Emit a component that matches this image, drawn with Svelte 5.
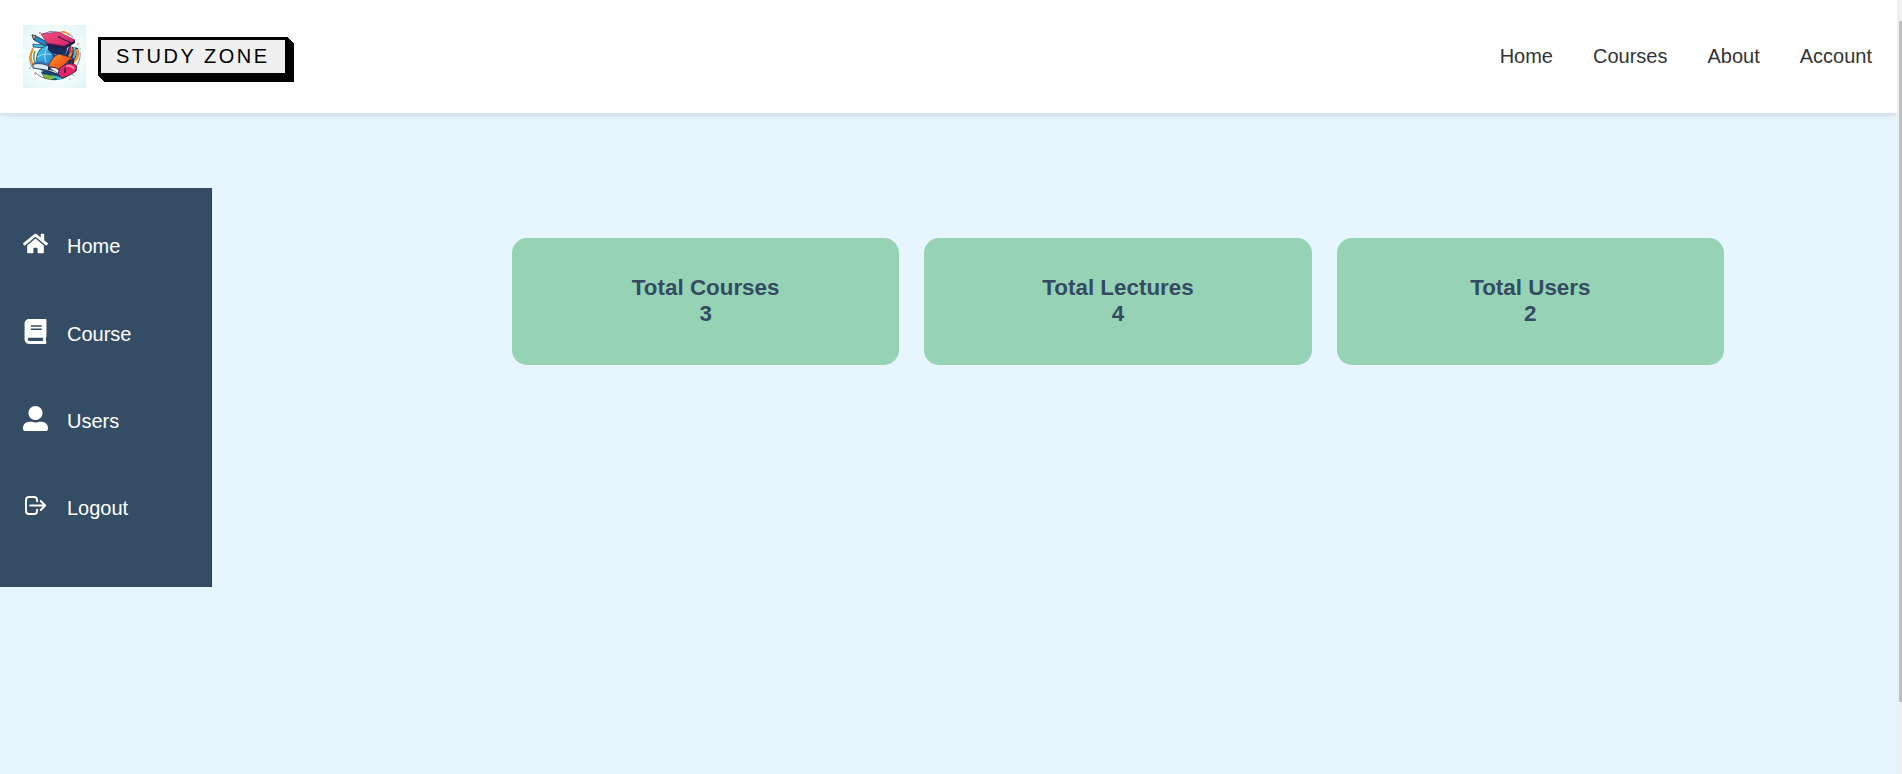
<script>
  const nav = ['Home', 'Courses', 'About', 'Account'];
  const menu = ['Home', 'Course', 'Users', 'Logout'];
  const stats = [
    { label: 'Total Courses', value: 3 },
    { label: 'Total Lectures', value: 4 },
    { label: 'Total Users', value: 2 }
  ];
</script>

<div class="page">
  <div class="content">
    <header>
      <div class="brand">
        <svg class="logo" viewBox="0 0 63 63" aria-hidden="true">
          <defs>
            <radialGradient id="paper" r="0.75"><stop offset="0.45" stop-color="#f8fefd" /><stop offset="1" stop-color="#dcf3f4" /></radialGradient>
            <linearGradient id="globe" x2="1" y2="1"><stop stop-color="#4fcdf2" /><stop offset="0.55" stop-color="#278bcf" /><stop offset="1" stop-color="#173c75" /></linearGradient>
            <linearGradient id="cap" x2="1" y2="1"><stop stop-color="#f0527f" /><stop offset="1" stop-color="#dc1c69" /></linearGradient>
            <linearGradient id="orange" x2="1" y2="1"><stop stop-color="#ffa02a" /><stop offset="0.5" stop-color="#f4631b" /><stop offset="1" stop-color="#e7481c" /></linearGradient>
          </defs>
          <rect width="63" height="63" fill="url(#paper)" />
          <path d="M10 23Q4 33 9 42M12 47Q18 54 28 54M40 7Q46 8 50 12M57 27Q58 36 52 43M20 9Q27 5 34 7" fill="none" stroke="#5b4b68" stroke-width="0.7" />
          <path d="M10 24Q5 33 11 41" fill="none" stroke="#ee8f2a" stroke-width="2" />
          <path d="M12 26Q9 33 13 39" fill="none" stroke="#679e47" stroke-width="1.6" />
          <path d="M46 21L55 23Q58 32 50 39L41 35Z" fill="#192d58" />
          <path d="M47 20Q51 28 44 34M54 24Q56 32 51 37" fill="none" stroke="#ff8b23" stroke-width="2.4" />
          <path d="M51 22Q54 30 48 36" fill="none" stroke="#4fbce0" stroke-width="2.2" />
          <path d="M38 7Q43 6 46 10" fill="none" stroke="#fb8b24" stroke-width="1.6" />
          <path d="M9 10L13 11L24 17L22 21L11 15Z" fill="#218ac4" stroke="#182950" stroke-width="0.8" />
          <path d="M9 10L13 11L11 15Z" fill="#f2b17f" stroke="#182950" stroke-width="0.7" />
          <path d="M10 19L21 20L23 23L10 22Z" fill="#48c5e5" stroke="#182950" stroke-width="0.7" />
          <circle cx="28" cy="34" r="14.5" fill="url(#globe)" stroke="#17365e" stroke-width="0.8" />
          <path d="M14 32Q23 26 37 32M25 21Q19 29 24 40M31 23Q34 30 31 38" fill="none" stroke="#c2f3fa" stroke-width="0.9" opacity="0.8" />
          <path d="M25 18V25Q30 31 43 29L45 20Z" fill="#172b58" />
          <path d="M28 28Q35 32 43 28V32Q37 33 30 32Z" fill="#244b87" />
          <path d="M23 18L41 21L52 15V18L42 24L24 21Z" fill="#25204b" />
          <path d="M18 9L36 7L52 15L41 21L24 18Z" fill="url(#cap)" stroke="#6d2056" stroke-width="0.6" />
          <path d="M36 12Q43 16 47 17V25" fill="none" stroke="#142549" stroke-width="1" />
          <circle cx="36" cy="12" r="1.1" fill="#203057" />
          <path d="M47 22L46 27L49 28L48 22Z" fill="#ec275f" />
          <path d="M18 47Q25 43 37 48L44 52Q33 58 21 53Z" fill="#17476d" />
          <path d="M20 49L35 52L27 55L20 52Z" fill="#82b53a" />
          <path d="M28 50L42 53L35 55Z" fill="#34b9d5" />
          <path d="M10 39Q21 37 29 43L37 50Q24 44 10 43Z" fill="#dfeaf1" stroke="#182950" stroke-width="0.9" />
          <path d="M11 38Q22 35 29 43" fill="none" stroke="#3774b9" stroke-width="2" />
          <path d="M25 42Q29 31 36 29L50 33Q42 36 38 46Q32 41 25 42Z" fill="url(#orange)" stroke="#3b2549" stroke-width="0.8" />
          <path d="M25 42Q33 41 38 46Q42 37 51 33V39L37 50Q32 45 25 45Z" fill="#253052" />
          <path d="M27 43Q34 42 38 48Q43 41 49 37L38 50Z" fill="#f5eee6" />
          <path d="M37 43Q44 37 51 39Q55 41 53 46Q47 51 39 53Q33 50 37 43Z" fill="#e82368" stroke="#3a2048" stroke-width="0.9" />
          <path d="M43 41Q49 40 51 44" fill="none" stroke="#f884a0" stroke-width="2" />
          <path d="M42 44L42 47" stroke="#4b2046" stroke-width="2" stroke-linecap="round" />
          <g fill="#ef527f"><circle cx="17" cy="8" r="0.9" /><circle cx="55" cy="19" r="0.8" /><circle cx="12" cy="49" r="0.8" /><circle cx="47" cy="54" r="0.7" /></g>
          <g fill="#35b6d4"><circle cx="57" cy="24" r="0.7" /><circle cx="7" cy="43" r="0.7" /><circle cx="50" cy="50" r="0.8" /></g>
        </svg>
        <div class="name">STUDY ZONE</div>
      </div>
      <nav>
        {#each nav as item}<span>{item}</span>{/each}
      </nav>
    </header>

    <div class="dashboard">
      <aside>
        {#each menu as item}
          <div class="entry">
            <div class="icon">
              {#if item === 'Home'}
                <svg viewBox="0 0 576 512"><path d="M280.37 148.26L96 300.11V464a16 16 0 0 0 16 16l112.06-.29a16 16 0 0 0 15.92-16V368a16 16 0 0 1 16-16h64a16 16 0 0 1 16 16v95.64a16 16 0 0 0 16 16.05L464 480a16 16 0 0 0 16-16V300L295.67 148.26a12.19 12.19 0 0 0-15.3 0zM571.6 251.47L488 182.56V44.05a12 12 0 0 0-12-12h-56a12 12 0 0 0-12 12v72.61L318.47 43a48 48 0 0 0-61 0L4.34 251.47a12 12 0 0 0-1.6 16.9l25.5 31A12 12 0 0 0 45.15 301l235.22-193.74a12.19 12.19 0 0 1 15.3 0L530.9 301a12 12 0 0 0 16.9-1.6l25.5-31a12 12 0 0 0-1.7-16.93z" /></svg>
              {:else if item === 'Course'}
                <svg viewBox="0 0 448 512"><path d="M448 360V24c0-13.3-10.7-24-24-24H96C43 0 0 43 0 96v320c0 53 43 96 96 96h328c13.3 0 24-10.7 24-24v-16c0-7.5-3.5-14.3-8.9-18.7-4.2-15.4-4.2-59.3 0-74.7 5.4-4.3 8.9-11.1 8.9-18.6zM128 134c0-3.3 2.7-6 6-6h212c3.3 0 6 2.7 6 6v20c0 3.3-2.7 6-6 6H134c-3.3 0-6-2.7-6-6v-20zm0 64c0-3.3 2.7-6 6-6h212c3.3 0 6 2.7 6 6v20c0 3.3-2.7 6-6 6H134c-3.3 0-6-2.7-6-6v-20zm253.4 250H96c-17.7 0-32-14.3-32-32 0-17.6 14.4-32 32-32h285.4c-1.9 17.1-1.9 46.9 0 64z" /></svg>
              {:else if item === 'Users'}
                <svg viewBox="0 0 512 512"><path d="M256 288c79.5 0 144-64.5 144-144S335.5 0 256 0 112 64.5 112 144s64.5 144 144 144zm128 32h-55.1c-22.2 10.2-46.9 16-72.9 16s-50.6-5.8-72.9-16H128C57.3 320 0 377.3 0 448v16c0 26.5 21.5 48 48 48h416c26.5 0 48-21.5 48-48v-16c0-70.7-57.3-128-128-128z" /></svg>
              {:else}
                <svg viewBox="0 0 25 25"><path class="line" d="M14 8.2V6.8Q14 4 11.2 4H6Q3 4 3 7V18Q3 21 6 21H11.2Q14 21 14 18.2V16.8M7.2 12.5H22M17.7 8L22.2 12.5L17.7 17" /></svg>
              {/if}
            </div>
            <span>{item}</span>
          </div>
        {/each}
      </aside>
      <main>
        {#each stats as stat}
          <section>
            <p>{stat.label}</p>
            <p>{stat.value}</p>
          </section>
        {/each}
      </main>
    </div>
  </div>
  <div class="track"><div class="thumb"></div></div>
</div>

<style>
  :global(body) { margin: 0; overflow: hidden; }
  .page { display: flex; height: 774px; background: #e7f5ff; font-family: "Liberation Sans", Arial, sans-serif; font-size: 20px; line-height: 23px; }
  .content { width: 1897px; }
  header { display: flex; align-items: center; justify-content: space-between; box-sizing: border-box; height: 113px; padding: 0 25px 0 23px; background: #fff; box-shadow: 0 2.5px 5px rgba(0, 0, 0, 0.1); }
  .brand { display: flex; align-items: center; gap: 12px; }
  .logo { display: block; width: 63px; height: 63px; }
  .name { padding: 5px 15px; border: 3px solid #000; background: #f0f0f0; color: #000; letter-spacing: 2.5px; white-space: nowrap; box-shadow: 1px 1px #000, 2px 2px #000, 3px 3px #000, 4px 4px #000, 5px 5px #000, 6px 6px #000; }
  nav { display: flex; gap: 40px; color: #333; }
  .dashboard { display: flex; align-items: flex-start; padding-top: 75px; }
  aside { box-sizing: border-box; width: 212px; height: 399px; padding: 43.4px 0 0 23px; background: #354d64; border-right: 1px solid #2b4055; color: #fff; }
  .entry { display: flex; height: 87.3px; gap: 19px; }
  .entry span { padding-top: 4px; }
  .icon { width: 25px; height: 25px; }
  .icon svg { display: block; width: 25px; height: 25px; fill: #fff; }
  .icon .line { fill: none; stroke: #fff; stroke-width: 1.9; stroke-linecap: round; stroke-linejoin: round; }
  main { display: grid; grid-template-columns: repeat(3, 1fr); gap: 25px; width: 1212px; margin: 50px 0 0 300px; }
  section { box-sizing: border-box; height: 127px; padding-top: 37px; border-radius: 15px; background: #96d3b5; color: #344b63; font-size: 22.4px; font-weight: 700; line-height: 25px; text-align: center; }
  section p + p { margin-top: 0.5px; }
  p { margin: 0; }
  .track { display: flow-root; width: 5px; height: 774px; background: #f0f0f0; }
  .thumb { width: 3px; height: 681px; margin: 21px 0 0 2px; background: #bfbfbf; }
</style>
